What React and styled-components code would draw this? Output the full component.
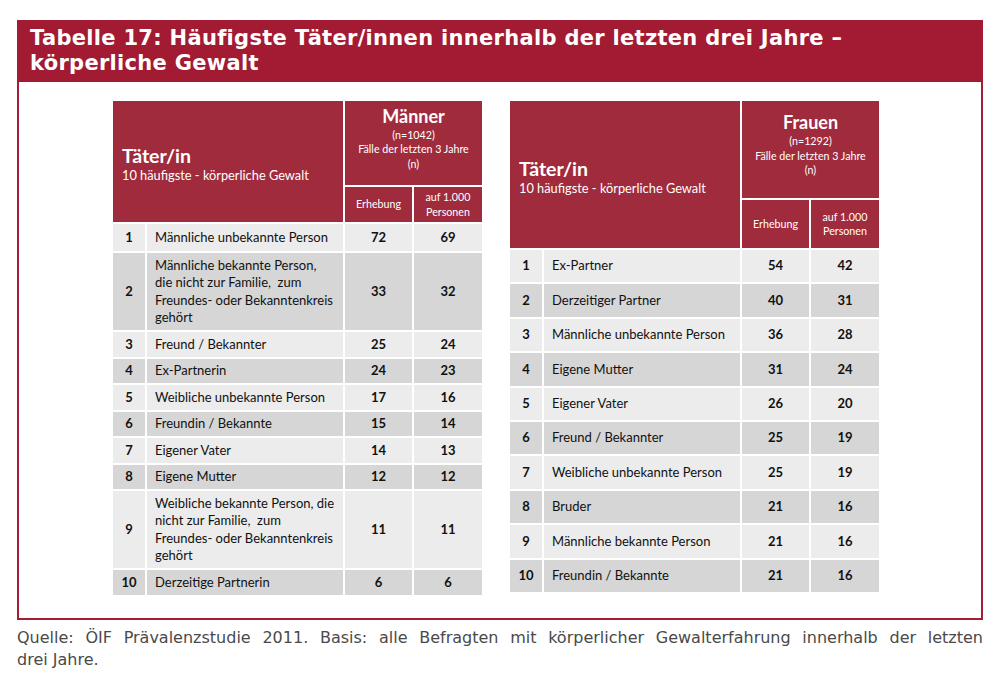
import React from "react";
import styled, { createGlobalStyle } from "styled-components";

const Global = createGlobalStyle`
  html, body { margin: 0; padding: 0; background: #ffffff; }
  body { font-family: "Lato", "Liberation Sans", sans-serif; }
  * { box-sizing: border-box; }
`;

const Page = styled.div`
  width: 1000px;
  padding: 20px 17px 0 17px;
`;

const Frame = styled.section`
  border: 2px solid #a41d35;
  border-top: none;
  display: flex;
  flex-direction: column;
`;

const TitleBar = styled.h1`
  margin: 0 -2px;
  background: #a21b33;
  color: #ffffff;
  font-family: "DejaVu Sans", Verdana, sans-serif;
  font-weight: bold;
  font-size: 21px;
  letter-spacing: 0.3px;
  line-height: 24.5px;
  padding: 6px 12px 7px 13px;
`;

const Tables = styled.div`
  display: flex;
  align-items: flex-start;
  gap: 28px;
  padding: 19px 0 23px 94px;
`;

const Table = styled.div`
  display: grid;
  grid-template-columns: 32px 196px 67px 68px;
  grid-template-rows: ${(p) => p.$topH}px ${(p) => p.$subH}px;
  grid-auto-rows: auto;
  gap: 2px 2px;
  font-family: "Lato", "Liberation Sans", sans-serif;
  color: #111111;
`;

const HeadTitle = styled.div`
  grid-column: 1 / 3;
  grid-row: 1 / 3;
  background: #a02b3c;
  color: #ffffff;
  display: flex;
  flex-direction: column;
  justify-content: center;
  padding: ${(p) => p.$pad}px 9px 0 9px;
`;

const HeadMain = styled.div`
  font-weight: bold;
  font-size: 19.5px;
  line-height: 22px;
`;

const HeadSub = styled.div`
  font-size: 12.8px;
  line-height: 17px;
`;

const GroupHead = styled.div`
  grid-column: 3 / 5;
  grid-row: 1;
  background: #a02b3c;
  color: #ffffff;
  display: flex;
  flex-direction: column;
  align-items: center;
  justify-content: center;
  text-align: center;
  padding-bottom: ${(p) => p.$padB}px;
`;

const GroupName = styled.div`
  font-weight: bold;
  font-size: 18px;
  line-height: 19px;
  margin-bottom: 2px;
`;

const GroupNote = styled.div`
  font-size: 10.7px;
  line-height: 14.5px;
`;

const SubHead = styled.div`
  grid-row: 2;
  background: #a02b3c;
  color: #ffffff;
  font-size: 10.7px;
  line-height: 14.5px;
  display: flex;
  align-items: center;
  justify-content: center;
  text-align: center;
`;

const Row = styled.div`
  grid-column: 1 / -1;
  display: grid;
  grid-template-columns: 32px 196px 67px 68px;
  gap: 2px;
  min-height: ${(p) => p.$h}px;
`;

const Cell = styled.div`
  background: ${(p) => (p.$dark ? "#d6d6d6" : "#ececec")};
  font-size: 13px;
  line-height: 17.5px;
  padding: 3.5px 0;
  display: flex;
  align-items: center;
`;

const NumCell = styled(Cell)`
  justify-content: center;
  font-weight: bold;
`;

const LabelCell = styled(Cell)`
  padding-left: 8px;
  padding-right: 4px;
  white-space: pre-wrap;
`;

const ValCell = styled(Cell)`
  justify-content: center;
  font-weight: bold;
`;

const Footnote = styled.div`
  margin-top: 7px;
  font-family: "DejaVu Sans", Tahoma, sans-serif;
  font-size: 16px;
  line-height: 22px;
  color: #4a4a4a;
`;

const FootLine = styled.span`
  display: block;
  text-align: ${(p) => (p.$justify ? "justify" : "left")};
  text-align-last: ${(p) => (p.$justify ? "justify" : "left")};
`;

const men = [
  ["Männliche unbekannte Person", 72, 69, 27],
  [
    "Männliche bekannte Person,\ndie nicht zur Familie,  zum\nFreundes- oder Bekanntenkreis\ngehört",
    33,
    32,
  ],
  ["Freund / Bekannter", 25, 24],
  ["Ex-Partnerin", 24, 23],
  ["Weibliche unbekannte Person", 17, 16],
  ["Freundin / Bekannte", 15, 14],
  ["Eigener Vater", 14, 13],
  ["Eigene Mutter", 12, 12],
  [
    "Weibliche bekannte Person, die\nnicht zur Familie,  zum\nFreundes- oder Bekanntenkreis\ngehört",
    11,
    11,
  ],
  ["Derzeitige Partnerin", 6, 6],
];

const women = [
  ["Ex-Partner", 54, 42],
  ["Derzeitiger Partner", 40, 31],
  ["Männliche unbekannte Person", 36, 28],
  ["Eigene Mutter", 31, 24],
  ["Eigener Vater", 26, 20],
  ["Freund / Bekannter", 25, 19],
  ["Weibliche unbekannte Person", 25, 19],
  ["Bruder", 21, 16],
  ["Männliche bekannte Person", 21, 16],
  ["Freundin / Bekannte", 21, 16],
];

function RankTable({ group, n, rows, topH, subH, rowH, titlePad, groupPadB }) {
  return (
    <Table $topH={topH} $subH={subH}>
      <HeadTitle $pad={titlePad}>
        <HeadMain>Täter/in</HeadMain>
        <HeadSub>10 häufigste - körperliche Gewalt</HeadSub>
      </HeadTitle>
      <GroupHead $padB={groupPadB}>
        <GroupName>{group}</GroupName>
        <GroupNote>(n={n})</GroupNote>
        <GroupNote>Fälle der letzten 3 Jahre</GroupNote>
        <GroupNote>(n)</GroupNote>
      </GroupHead>
      <SubHead>Erhebung</SubHead>
      <SubHead>
        auf 1.000
        <br />
        Personen
      </SubHead>
      {rows.map(([label, a, b, h], i) => {
        const dark = i % 2 === 1;
        return (
          <Row key={i} $h={h || rowH}>
            <NumCell $dark={dark}>{i + 1}</NumCell>
            <LabelCell $dark={dark}>
              <span>{label}</span>
            </LabelCell>
            <ValCell $dark={dark}>{a}</ValCell>
            <ValCell $dark={dark}>{b}</ValCell>
          </Row>
        );
      })}
    </Table>
  );
}

export default function App() {
  return (
    <>
      <Global />
      <Page>
        <Frame>
          <TitleBar>
            Tabelle 17: Häufigste Täter/innen innerhalb der letzten drei Jahre –
            <br />
            körperliche Gewalt
          </TitleBar>
          <Tables>
            <RankTable
              group="Männer"
              n="1042"
              rows={men}
              topH={84}
              subH={35}
              rowH={24}
              titlePad={6}
              groupPadB={8}
            />
            <RankTable
              group="Frauen"
              n="1292"
              rows={women}
              topH={97}
              subH={48}
              rowH={32.4}
              titlePad={6}
              groupPadB={8}
            />
          </Tables>
        </Frame>
        <Footnote>
          <FootLine $justify>
            Quelle: ÖIF Prävalenzstudie 2011. Basis: alle Befragten mit körperlicher Gewalterfahrung innerhalb der letzten
          </FootLine>
          <FootLine>drei Jahre.</FootLine>
        </Footnote>
      </Page>
    </>
  );
}
